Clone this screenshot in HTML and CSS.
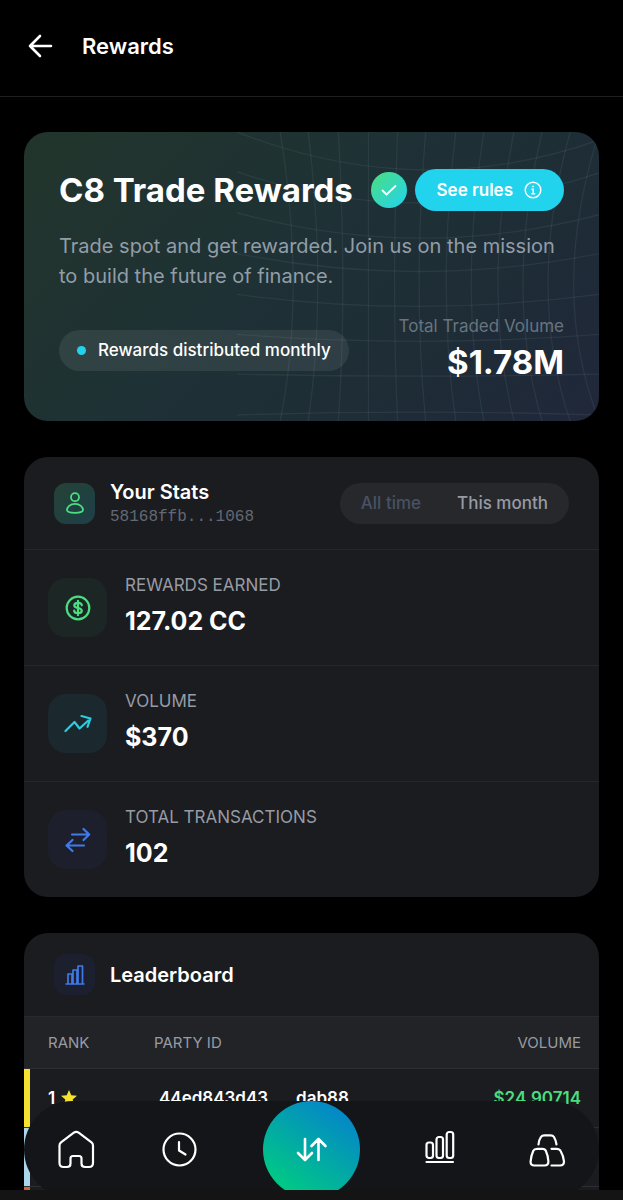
FILE: index.html
```html
<!DOCTYPE html>
<html lang="en">
<head>
<meta charset="utf-8">
<meta name="viewport" content="width=device-width, initial-scale=1">
<title>Rewards</title>
<link rel="stylesheet" href="styles.css">
</head>
<body>
<div class="app">
  <header class="topbar">
    <button class="back" type="button" aria-label="Back">
      <svg width="28" height="28" viewBox="0 0 28 28" fill="none" stroke="currentColor" stroke-width="2.6" stroke-linecap="round" stroke-linejoin="round"><path d="M25 14H4M14 4 4 14l10 10"/></svg>
    </button>
    <h1 class="topbar-title">Rewards</h1>
  </header>

  <main class="content">
    <section class="hero">
      <svg class="hero-grid" viewBox="0 0 361 290" preserveAspectRatio="none" fill="none" stroke="currentColor" stroke-width="1.3">
        <path d="M0 0Q181 72 361 8M0 40Q181 102 361 41M0 81Q181 131 361 83M0 122Q181 158 361 122M0 163Q181 187 361 163M0 203Q181 217 361 203M0 243Q181 247 361 243M0 284Q181 278 361 284"/>
        <path d="M43 0Q69 160 43 290M71 0Q90 160 71 290M101 0Q110 160 101 290M131 0V290M160 0Q154 160 160 290M188 0Q175 160 188 290M218 0Q199 160 218 290M246 0Q221 160 246 290M276 0Q244 160 276 290M304 0Q266 160 304 290M332 0Q288 160 332 290M361 0Q310 160 361 290"/>
      </svg>
      <div class="hero-head">
        <h2 class="hero-title">C8 Trade Rewards</h2>
        <span class="verified"><svg width="18" height="18" viewBox="0 0 18 18" fill="none" stroke="currentColor" stroke-width="1.8" stroke-linecap="round" stroke-linejoin="round"><path d="m2.500 9.500 4 4L15.500 5"/></svg></span>
        <button class="rules" type="button">See rules
          <svg width="18" height="18" viewBox="0 0 18 18" fill="none" stroke="currentColor" stroke-width="1.500"><circle cx="9" cy="9" r="7.800"/><path d="M7.500 8.200H9.200V12.800M7.200 12.800h4"/><circle cx="9" cy="5.500" r=".6" fill="currentColor" stroke-width=".8"/></svg>
        </button>
      </div>
      <p class="hero-text">Trade spot and get rewarded. Join us on the mission to build the future of finance.</p>
      <div class="hero-foot">
        <span class="pill"><span class="dot"></span>Rewards distributed monthly</span>
        <div class="total">
          <span class="total-label">Total Traded Volume</span>
          <strong class="total-value">$1.78M</strong>
        </div>
      </div>
    </section>

    <section class="card">
      <header class="card-head">
        <span class="badge badge-user"><svg width="24" height="24" viewBox="0 0 24 24" fill="none" stroke="currentColor" stroke-width="1.800"><circle cx="12" cy="6.200" r="4"/><path d="M12 12.800c5 0 8 3.500 8 6.300C20 21.300 16 21.800 12 21.800s-8-.5-8-2.700C4 16.300 7 12.800 12 12.800Z"/></svg></span>
        <div class="owner">
          <h2 class="card-title">Your Stats</h2>
          <span class="owner-id">58168ffb...1068</span>
        </div>
        <div class="period">
          <button class="period-btn" type="button">All time</button>
          <button class="period-btn is-active" type="button" aria-pressed="true">This month</button>
        </div>
      </header>
      <div class="stat">
        <span class="tile tile-green"><svg width="28" height="28" viewBox="0 0 28 28" fill="none" stroke="currentColor" stroke-width="2.200" stroke-linecap="round"><circle cx="14" cy="14" r="11.300"/><path d="M17.800 11.300c0-1.700-1.600-2.500-3.800-2.500s-3.700 1-3.700 2.600c0 1.700 1.600 2.200 3.700 2.600s3.800 1 3.800 2.700-1.600 2.500-3.800 2.500-3.800-.8-3.800-2.500M14 6.800v14.400"/></svg></span>
        <div class="stat-body"><span class="stat-label">REWARDS EARNED</span><strong class="stat-value">127.02 CC</strong></div>
      </div>
      <div class="stat">
        <span class="tile tile-cyan"><svg width="28" height="28" viewBox="0 0 28 28" fill="none" stroke="currentColor" stroke-width="2.200" stroke-linecap="round" stroke-linejoin="round"><path d="m1.500 21 9-9 5 6.500L26 9M17.500 6 26.500 8.500 23.500 16.800"/></svg></span>
        <div class="stat-body"><span class="stat-label">VOLUME</span><strong class="stat-value">$370</strong></div>
      </div>
      <div class="stat">
        <span class="tile tile-blue"><svg width="28" height="28" viewBox="0 0 28 28" fill="none" stroke="currentColor" stroke-width="2.200" stroke-linecap="round" stroke-linejoin="round"><path d="M8 8.500H25M19.500 3l5.700 5.500-5.700 5.500M20 19.500H2.500M8.500 14l-6 5.500 6 5.500"/></svg></span>
        <div class="stat-body"><span class="stat-label">TOTAL TRANSACTIONS</span><strong class="stat-value">102</strong></div>
      </div>
    </section>

    <section class="card">
      <header class="card-head card-head-board">
        <span class="badge badge-board"><svg width="22" height="22" viewBox="0 0 22 22" fill="none" stroke="currentColor" stroke-width="1.700" stroke-linejoin="round"><path d="M1.500 20h19M4 20V10h4v10M9 20V6h4v14M14 20V2h4.500v18"/></svg></span>
        <h2 class="card-title">Leaderboard</h2>
      </header>
      <table class="board">
        <thead>
          <tr><th class="col-rank" scope="col">RANK</th><th scope="col">PARTY ID</th><th class="col-volume" scope="col">VOLUME</th></tr>
        </thead>
        <tbody>
          <tr class="gold">
            <td class="col-rank"><span class="rank">1 <svg width="16" height="16" viewBox="0 0 16 16"><path fill="#f5e12e" d="m8 0 2.300 5.300 5.700.5-4.300 3.800L13 15.500l-5-3-5 3 1.300-5.900L0 5.800l5.700-.5z"/></svg></span></td>
            <td><span class="party"><span>44ed843d43</span><span>dab88</span></span></td>
            <td class="col-volume">$24.90714</td>
          </tr>
          <tr class="silver"><td class="col-rank"></td><td></td><td class="col-volume"></td></tr>
          <tr class="bronze"><td class="col-rank"></td><td></td><td class="col-volume"></td></tr>
        </tbody>
      </table>
    </section>
  </main>

  <nav class="tabbar" aria-label="Main">
    <a class="tab" href="#home" aria-label="Home"><svg width="38" height="40" viewBox="0 0 38 40"><path d="M16.500 2.900 4 12.300Q2.500 13.500 2.500 15.500V33Q2.500 37 6.500 37H10Q13.500 37 13.500 33.500V28.500Q13.500 26 16 26H22Q24.500 26 24.500 28.500V33.500Q24.500 37 28 37H32Q36 37 36 33V15.500Q36 13.500 34.500 12.300L22 2.900Q19.250 1 16.500 2.900Z"/></svg></a>
    <a class="tab" href="#history" aria-label="History"><svg width="38" height="40" viewBox="0 0 38 40"><circle cx="19.500" cy="19.500" r="16"/><path d="M19 12v8.500l6.500 4"/></svg></a>
    <a class="swap" href="#swap" aria-label="Swap"><svg width="32" height="32" viewBox="0 0 32 32"><path d="M9 5v20.500M2 19l7 7 7-7M22.500 26V5M15.500 12l7-7 7 7"/></svg></a>
    <a class="tab" href="#markets" aria-label="Markets"><svg width="38" height="40" viewBox="0 0 38 40"><rect x="1.500" y="12.500" width="6.500" height="15.500" rx="2.500"/><rect x="11.500" y="7" width="6.500" height="21" rx="2.500"/><rect x="21.700" y="2" width="6.500" height="26" rx="2.500"/><path d="M1.500 32H28"/></svg></a>
    <a class="tab" href="#portfolio" aria-label="Portfolio"><svg width="38" height="40" viewBox="0 0 38 40"><path d="M10.500 14.500Q11 9.500 13 6.800Q14 5.300 16.300 5.300H22.500Q25 5.300 26 7Q28 10.500 28.500 14.500M9 18.800H14.500Q17 18.800 17.800 20.800Q20.200 26 20.400 31.500Q20.400 35.500 16.500 35.500H6.300Q2.400 35.500 2.600 31.500Q3 26 5.300 20.800Q6.300 18.800 9 18.800ZM23.500 18.800H28.500Q31.500 18.800 32.500 20.800Q35.500 26 36 31.500Q36 35.500 32 35.500H23.500"/></svg></a>
  </nav>
  <div class="bottom-strip"></div>
</div>
</body>
</html>
```

FILE: styles.css
```css
* { box-sizing: border-box; }

body {
  margin: 0;
  background: #000;
  color: #fff;
  font-family: Inter, "Liberation Sans", sans-serif;
  -webkit-font-smoothing: antialiased;
}

h1, h2, p { margin: 0; }

button {
  border: 0;
  padding: 0;
  background: none;
  color: inherit;
  font: inherit;
}

svg { display: block; flex-shrink: 0; }

.app {
  position: relative;
  display: flex;
  flex-direction: column;
  height: 100vh;
  overflow: hidden;
}

.topbar {
  display: flex;
  align-items: center;
  flex-shrink: 0;
  gap: 28px;
  padding: 32px 26px 36px;
  border-bottom: 1px solid #202020;
}

.topbar-title {
  font-size: 22px;
  line-height: 28px;
  font-weight: 600;
}

.content {
  flex: 1;
  min-height: 0;
  display: flex;
  flex-direction: column;
  gap: 36px;
  padding: 35px 24px 0;
  overflow: hidden auto;
  scrollbar-width: none;
}

/* Hero */

.hero {
  position: relative;
  flex-shrink: 0;
  padding: 36px 35px 35px;
  border-radius: 24px;
  overflow: hidden;
  background: linear-gradient(135deg, #22352b 0%, #1e3135 45%, #1e2d36 70%, #20273a 100%);
}

.hero > * { position: relative; }

.hero > .hero-grid {
  position: absolute;
  top: 0;
  right: 0;
  width: 63%;
  height: 100%;
  color: rgba(150, 185, 205, 0.09);
}

.hero-head {
  display: flex;
  align-items: center;
  height: 44px;
}

.hero-title {
  flex: 1;
  font-size: 33px;
  line-height: 44px;
  font-weight: 700;
  white-space: nowrap;
}

.verified {
  display: grid;
  place-items: center;
  width: 36px;
  height: 36px;
  margin-right: 8px;
  border-radius: 50%;
  background: linear-gradient(135deg, #4ade80, #22d3ee);
}

.rules {
  display: flex;
  align-items: center;
  gap: 11px;
  height: 42px;
  padding: 0 22px;
  border-radius: 21px;
  background: #22d3ee;
  font-size: 17px;
  font-weight: 600;
  white-space: nowrap;
}

.hero-text {
  margin-top: 19px;
  color: #929da8;
  font-size: 20px;
  line-height: 30px;
}

.hero-foot {
  display: flex;
  align-items: center;
  justify-content: space-between;
  margin-top: 23px;
}

.pill {
  display: flex;
  align-items: center;
  gap: 12px;
  height: 41px;
  padding: 0 18px;
  border-radius: 21px;
  background: rgba(255, 255, 255, 0.08);
  font-size: 17px;
  font-weight: 500;
  white-space: nowrap;
}

.dot {
  width: 9px;
  height: 9px;
  border-radius: 50%;
  background: #22d3ee;
}

.total {
  display: flex;
  flex-direction: column;
  align-items: flex-end;
}

.total-label {
  color: #68747f;
  font-size: 17px;
  line-height: 24px;
}

.total-value {
  font-size: 33px;
  line-height: 48px;
  font-weight: 700;
}

/* Cards */

.card {
  flex-shrink: 0;
  border-radius: 24px;
  overflow: hidden;
  background: #1b1c1f;
}

.card-head {
  display: flex;
  align-items: center;
  gap: 15px;
  height: 92px;
  padding: 0 30px;
}

.card-head-board { height: 83px; }

.card-title {
  font-size: 20px;
  line-height: 28px;
  font-weight: 600;
}

.badge {
  display: grid;
  place-items: center;
  width: 41px;
  height: 41px;
  border-radius: 12px;
}

.badge-user {
  color: #4ade80;
  background: linear-gradient(135deg, #254236, #1d4048);
}

.badge-board {
  color: #3f7ae8;
  background: #1c1f2e;
}

.owner { flex: 1; }

.owner-id {
  display: block;
  color: #636874;
  font-family: "Liberation Mono", monospace;
  font-size: 16px;
  line-height: 22px;
}

.period {
  display: flex;
  gap: 36px;
  height: 41px;
  padding: 0 21px;
  border-radius: 21px;
  background: #27282b;
}

.period-btn {
  color: #485264;
  font-size: 17px;
  font-weight: 500;
}

.period-btn.is-active { color: #969ba5; }

.stat {
  display: flex;
  align-items: center;
  gap: 18px;
  height: 116px;
  padding: 0 24px;
  border-top: 1px solid #26272a;
}

.tile {
  display: grid;
  place-items: center;
  width: 59px;
  height: 59px;
  border-radius: 18px;
}

.tile-green { color: #4ade80; background: #1c2725; }
.tile-cyan { color: #2dcbe0; background: #1b282d; }
.tile-blue { color: #407ce9; background: #1d1f2d; }

.stat-body {
  display: flex;
  flex-direction: column;
  gap: 6px;
  padding-bottom: 4px;
}

.stat-label {
  color: #969ba5;
  font-size: 17px;
  line-height: 24px;
}

.stat-value {
  font-size: 25px;
  line-height: 36px;
  font-weight: 700;
}

/* Leaderboard */

.board {
  width: 100%;
  border-collapse: collapse;
  font-size: 17px;
  font-weight: 600;
}

.board th {
  height: 52px;
  padding: 0;
  border-top: 1px solid #292a2d;
  background: #222326;
  color: #969ba5;
  font-size: 15px;
  font-weight: 400;
  text-align: left;
}

.board td {
  height: 59px;
  padding: 0;
  border-top: 1px solid #2d2e31;
}

.board .col-rank { width: 130px; padding-left: 24px; }
.board .col-volume { padding-right: 18px; text-align: right; }
.board td.col-volume { color: #4ade80; }

.gold .col-rank { box-shadow: inset 6px 0 #f5e12e; }
.silver .col-rank { box-shadow: inset 6px 0 #a9d6ea; }
.bronze .col-rank { box-shadow: inset 6px 0 #c8683c; }

.rank {
  display: flex;
  align-items: center;
  gap: 6px;
}

.party {
  display: flex;
  gap: 28px;
  padding-left: 5px;
}

/* Bottom navigation */

.tabbar {
  position: absolute;
  left: 24px;
  right: 24px;
  bottom: 2px;
  display: flex;
  align-items: center;
  justify-content: space-between;
  height: 97px;
  padding: 0 33px;
  border-radius: 49px;
  background: #141518;
}

.tab, .swap { color: #fff; }

.tabbar svg {
  fill: none;
  stroke: currentColor;
  stroke-width: 2.2px;
  stroke-linecap: round;
  stroke-linejoin: round;
}

.swap {
  display: grid;
  place-items: center;
  width: 97px;
  height: 97px;
  border-radius: 50%;
  background: linear-gradient(35deg, #00cd80 10%, #0485ca 88%);
}

.swap svg { stroke-width: 2.6px; }

.bottom-strip {
  position: relative;
  flex-shrink: 0;
  height: 10px;
  background: #141414;
}
```
